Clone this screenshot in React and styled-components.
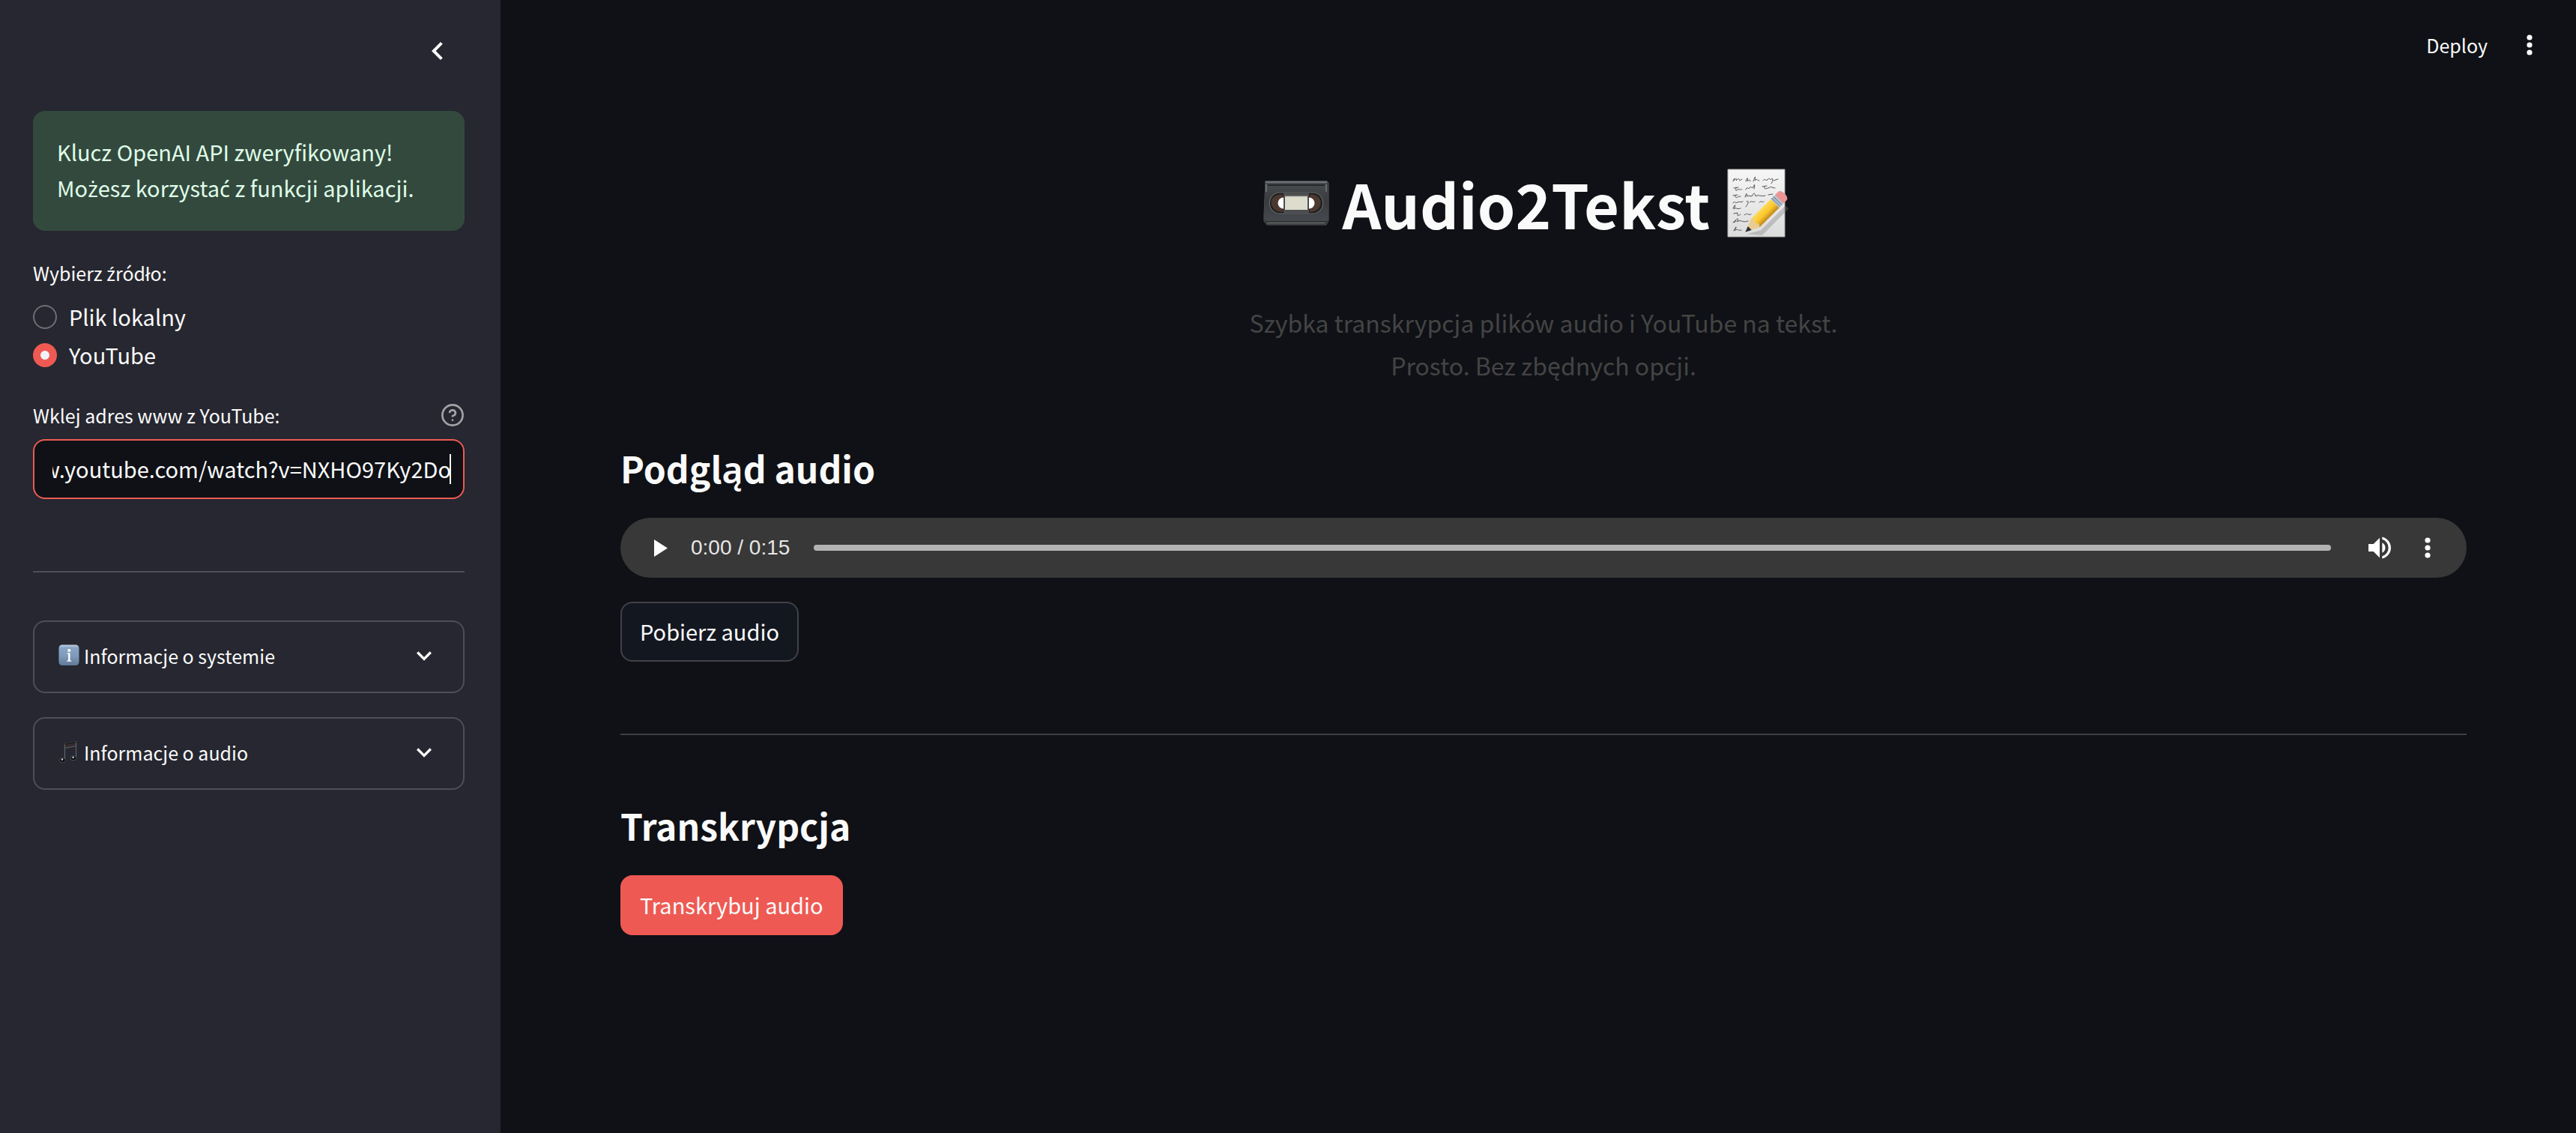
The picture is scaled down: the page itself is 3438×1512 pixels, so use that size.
import React, { useEffect, useRef, useState } from "react";
import styled, { createGlobalStyle } from "styled-components";

const font = '"Source Sans Pro", "Noto Sans CJK SC", "Noto Sans", sans-serif';

const GlobalStyle = createGlobalStyle`
  * { box-sizing: border-box; }
  body {
    margin: 0;
    background: #0f1116;
    color: #fafafa;
    font-family: ${font};
    font-size: 29px;
    line-height: 48px;
  }
  button, input { font: inherit; color: inherit; }
  button { cursor: pointer; }
  svg { display: block; flex: none; overflow: visible; }
`;

const Page = styled.div`
  display: flex;
  min-height: 100vh;
`;

const Sidebar = styled.aside`
  flex: 0 0 668px;
  padding: 36px 48px 64px 44px;
  background: #262730;
`;

const SidebarTop = styled.div`
  display: flex;
  justify-content: flex-end;
  height: 112px;
  padding-right: 4px;
`;

const IconButton = styled.button`
  display: grid;
  place-items: center;
  width: 64px;
  height: 64px;
  padding: 0;
  border: 0;
  background: none;
`;

const SidebarBody = styled.div`
  display: flex;
  flex-direction: column;
  gap: 32px;
`;

const Alert = styled.div`
  padding: 30px 32px 34px;
  border-radius: 16px;
  background: #33493d;
  color: #dffde9;
`;

const Accented = styled.span`
  font-family: "Noto Sans", sans-serif;
  line-height: 1;
`;

const Field = styled.div``;

const FieldLabel = styled.div`
  display: flex;
  align-items: center;
  justify-content: space-between;
  margin-bottom: 8px;
  font-size: 25px;
`;

const HelpButton = styled.button`
  padding: 0;
  border: 0;
  background: none;
  color: #a3a4a8;
`;

const RadioGroup = styled.div`
  display: flex;
  flex-direction: column;
  gap: 3px;
  padding-top: 3px;
`;

const RadioLabel = styled.label`
  display: flex;
  align-items: center;
  gap: 16px;
  height: 48px;
`;

const RadioText = styled.span`
  padding-bottom: 3px;
`;

const Radio = styled.input`
  appearance: none;
  width: 32px;
  height: 32px;
  margin: 0;
  border: 2px solid #6d6e75;
  border-radius: 50%;
  background: #262730;
  &:checked {
    border: 10px solid #ee5a53;
    background: #f0f2f6;
  }
`;

const TextInput = styled.input`
  display: block;
  width: 100%;
  height: 80px;
  padding: 0 16px 3px 24px;
  border: 2px solid #ee5a53;
  border-radius: 16px;
  outline: none;
  background: #0f1116 linear-gradient(#fafafa, #fafafa) right 16px center / 2px 40px no-repeat;
  caret-color: transparent;
`;

const Divider = styled.hr`
  height: 2px;
  margin: ${(p) => (p.$main ? "96px 0 0" : "64px 0 32px")};
  border: 0;
  background: ${(p) => (p.$main ? "#3e3f44" : "#4d4e57")};
`;

const Expander = styled.button`
  display: flex;
  align-items: center;
  gap: 6px;
  width: 100%;
  height: 97px;
  padding: 0 32px 3px;
  border: 2px solid #4d4e57;
  border-radius: 16px;
  background: none;
  font-size: 25px;
  text-align: left;
`;

const ExpanderText = styled.span`
  flex: 1;
`;

const Main = styled.main`
  flex: 1;
  min-width: 0;
`;

const Toolbar = styled.header`
  display: flex;
  justify-content: flex-end;
  align-items: center;
  gap: 24px;
  height: 120px;
  padding: 0 30px;
`;

const DeployButton = styled.button`
  padding: 0;
  border: 0;
  background: none;
  font-size: 25px;
`;

const Content = styled.div`
  padding: 74px 146px 96px 160px;
`;

const Title = styled.h1`
  display: flex;
  justify-content: center;
  align-items: center;
  gap: 18px;
  margin: 0;
  padding: 24px 46px 32px 0;
  font-size: 81px;
  line-height: 106px;
  font-weight: 700;
`;

const Subtitle = styled.p`
  margin: 46px 0 0;
  color: #444444;
  font-size: 32px;
  line-height: 57px;
  text-align: center;
`;

const SectionTitle = styled.h3`
  margin: ${(p) => p.$top}px 0 0;
  padding: 16px 0 32px;
  font-size: 48px;
  line-height: 70px;
  font-weight: 600;
`;

const Player = styled.div`
  display: flex;
  align-items: center;
  height: 80px;
  padding: 0 20px;
  border-radius: 40px;
  background: #383838;
`;

const Time = styled.span`
  margin: 0 32px 0 10px;
  color: #e6e6e6;
  font-family: "Liberation Sans", sans-serif;
  font-size: 28px;
`;

const Seek = styled.input`
  appearance: none;
  flex: 1;
  min-width: 0;
  height: 8px;
  margin: 0 33px 0 0;
  border-radius: 4px;
  background: #b3b3b3;
  &::-webkit-slider-thumb {
    appearance: none;
    width: 0;
    height: 0;
  }
`;

const ActionButton = styled.button`
  display: block;
  height: 80px;
  margin-top: ${(p) => (p.$primary ? 0 : 32)}px;
  padding: 0 24px 3px;
  border: 2px solid ${(p) => (p.$primary ? "#ee5a53" : "#414249")};
  border-radius: 16px;
  background: ${(p) => (p.$primary ? "#ee5a53" : "#131720")};
`;

const ChevronLeft = () => (
  <svg width="48" height="48" viewBox="0 0 24 24" fill="#fafafa">
    <path d="M15.41 7.41 14 6l-6 6 6 6 1.41-1.41L10.83 12z" />
  </svg>
);

const ChevronDown = () => (
  <svg width="40" height="40" viewBox="0 0 24 24" fill="#fafafa">
    <path d="M16.59 8.59 12 13.17 7.41 8.59 6 10l6 6 6-6z" />
  </svg>
);

const Dots = () => (
  <svg width="40" height="40" viewBox="0 0 40 40" fill="#fff">
    <circle cx="20" cy="10" r="3.6" />
    <circle cx="20" cy="20" r="3.6" />
    <circle cx="20" cy="30" r="3.6" />
  </svg>
);

const PlayIcon = () => (
  <svg width="40" height="40" viewBox="0 0 40 40" fill="#fff">
    <path d="M13 9v23l18-11.500z" />
  </svg>
);

const VolumeIcon = () => (
  <svg width="40" height="40" viewBox="0 0 24 24" fill="#fff">
    <path d="M3 9v6h4l5 5V4L7 9H3zm13.500 3A4.500 4.500 0 0 0 14 7.970v8.050A4.500 4.500 0 0 0 16.500 12zM14 3.230v2.060a7 7 0 0 1 0 13.420v2.060a9 9 0 0 0 0-17.540z" />
  </svg>
);

const HelpIcon = () => (
  <svg width="32" height="32" viewBox="0 0 24 24" fill="none" stroke="currentColor" strokeWidth="2" strokeLinecap="round" strokeLinejoin="round">
    <circle cx="12" cy="12" r="10.200" />
    <path d="M9.100 9a3 3 0 0 1 5.830 1c0 2-3 3-3 3" />
    <path d="M12 17h.01" />
  </svg>
);

const InfoEmoji = () => (
  <svg width="28" height="30" viewBox="0 0 28 30">
    <defs>
      <linearGradient id="info" x1="0" y1="0" x2="0" y2="1">
        <stop offset="0" stopColor="#c3d3e6" />
        <stop offset="0.140" stopColor="#89a5c5" />
        <stop offset="0.550" stopColor="#7f9aba" />
        <stop offset="1" stopColor="#5f7a97" />
      </linearGradient>
    </defs>
    <rect x="0.500" y="0.500" width="27" height="27.500" rx="4.500" fill="url(#info)" />
    <circle cx="14.300" cy="8" r="2.100" fill="#fff" />
    <path d="M11.500 11.500h4v10h1.800v1.300h-6v-1.300h1.800v-8.700h-1.600z" fill="#fff" />
  </svg>
);

const NotesEmoji = () => (
  <svg width="28" height="30" viewBox="0 0 28 30">
    <path d="M8 3.500 24 .5v5L8 8.500z" fill="#372b2d" />
    <path d="M8.500 25V3.600L23.500.8V22M8.500 9.500l15-3" fill="none" stroke="#5c6366" strokeWidth="1.200" />
    <path d="M8.500 4 23.500 1.200" stroke="#171719" strokeWidth="1.500" />
    <ellipse cx="5.500" cy="25.500" rx="4" ry="3" fill="#0b0c0d" stroke="#465154" />
    <ellipse cx="20" cy="22.700" rx="4" ry="3" fill="#0b0c0d" stroke="#465154" />
    <circle cx="5" cy="24.500" r="1.200" fill="#d4dada" />
    <circle cx="19.600" cy="21.700" r="1.200" fill="#d4dada" />
  </svg>
);

const CassetteEmoji = () => (
  <svg width="88" height="92" viewBox="0 0 88 92">
    <defs>
      <linearGradient id="tape" x1="0" y1="0" x2="0" y2="1">
        <stop offset="0" stopColor="#4a4d50" />
        <stop offset="0.500" stopColor="#393b3e" />
        <stop offset="1" stopColor="#46494d" />
      </linearGradient>
    </defs>
    <path d="M3 17h82l2 2v50l-3 6H5l-4-5V62z" fill="#2c2e30" stroke="#55585a" />
    <path d="M2.500 16.500h83L87 63c0 5-1 7-4 7H5c-3 0-4-2-4-7z" fill="url(#tape)" />
    <path d="M5 72.500h78" stroke="#6c6f70" strokeWidth="1.500" />
    <path d="M3 18h82" stroke="#717476" strokeWidth="1.800" />
    <path d="M4 21v10M84 21v10" stroke="#686b6d" strokeWidth="2" />
    <path d="M6 22h76" stroke="#242628" strokeWidth="2" />
    <path d="M27 32H21C4 34 4 58 21 60H67C84 58 84 34 67 32z" fill="#1f2021" stroke="#606366" strokeWidth="1.200" />
    <path d="M26 34.500C5 33 6 58 26 58z" fill="#4b382f" />
    <path d="M62 34.500C82 33 81 58 62 58z" fill="#4b382f" />
    <circle cx="27" cy="46" r="7.500" fill="#fff" />
    <circle cx="61" cy="46" r="7.500" fill="#fff" />
    <path d="M27 32h34v28H27z" fill="#4b4e51" />
    <path d="M29 37h30v18H29z" fill="#dedccd" />
    <path d="M29 37h30" stroke="#aaa99f" />
  </svg>
);

const MemoEmoji = () => (
  <svg width="88" height="92" viewBox="0 0 88 92">
    <defs>
      <linearGradient id="paper" x1="0" y1="0" x2="0" y2="1">
        <stop offset="0" stopColor="#f6f6f6" />
        <stop offset="1" stopColor="#dcdcdc" />
      </linearGradient>
      <linearGradient id="pencil" x1="0" y1="0" x2="1" y2="0">
        <stop offset="0" stopColor="#ffdb53" />
        <stop offset="0.550" stopColor="#fac52d" />
        <stop offset="1" stopColor="#bf861a" />
      </linearGradient>
    </defs>
    <path d="M6 1h76v90H6z" fill="url(#paper)" stroke="#aaa" />
    <g fill="none" stroke="#555" strokeWidth="1" strokeLinecap="round" strokeLinejoin="round">
      <path d="M13 17c2-5 2-5 1-1 3-4 4-3 3 0 3-3 4-3 5 0l3-2M30 17c2-6 3-6 2 0 3-3 4-2 4 0M40 17c3-8 3-8 2-1 4-4 3 1 6 0M53 16c3-4 3 1 6-1 2-4 3 1 5-1 3-3 2 4 0 6M67 16l6-2" />
      <path d="M14 26l6-1m-3 0c-1 5 0 6 3 2 2 3 4-1 5 1M30 28c2-5 3 0 5-2 2-4 2 1 5-1 1-5 3-5 1 2M52 24l6-1m-3 1c-1 5 3 2 5 2 4-3 6 0 9 0" />
      <path d="M13 36l6-1m-3 1c0 6 4 0 7 1M29 38c2-7 3-5 2-1 3-2 5 1 8-1 2-6 4-1 4 1 4-3 7 1 13-1M60 35l6-1" />
      <path d="M13 46c2-4 3 1 6-1 2-2 3 1 7-1M31 44c4-3 2 4-1 7M35 45c3-3 4 1 7-1M48 45c3-3 3 1 6-1" />
      <path d="M13 53c4-9 3-2 1 1 3-3 4 1 9-1M14 60l5-1c-1 6 2 3 4 2M28 62c4-4 5 1 9-1" />
      <path d="M13 72c6-6 4-1 1 0 6-9 7-4 4-1 6-4 7 2 15-1M14 83c4-9 4-5 1 0 4-4 5 1 9-1" />
    </g>
    <g transform="translate(30 84) rotate(45)">
      <path d="M3 2 13-15V-62H19V-12z" fill="#777" opacity=".35" />
      <path d="M-7-17V-54H9v37z" fill="url(#pencil)" />
      <path d="M-7-17 0 0 9-17 5-20 1-17-3-20z" fill="#e9cc91" />
      <path d="M-3-7 0 1 4-7z" fill="#2e3036" />
      <path d="M-7-62H9v8H-7z" fill="#b3c2cf" />
      <path d="M-7-59H9M-7-56H9" stroke="#71889b" />
      <path d="M-7-62v-6c0-6 16-6 16 0v6z" fill="#ec9495" />
    </g>
  </svg>
);

// The main family has no ready-made glyphs for these letters.
const Pl = ({ children }) =>
  children.split(/([żźćł])/).map((part, i) => (i % 2 ? <Accented key={i}>{part}</Accented> : part));

export default function App() {
  const [source, setSource] = useState("youtube");
  const [url, setUrl] = useState("https://www.youtube.com/watch?v=NXHO97Ky2Do");
  const urlRef = useRef(null);

  useEffect(() => {
    const el = urlRef.current;
    el.focus();
    el.setSelectionRange(el.value.length, el.value.length);
    el.scrollLeft = el.scrollWidth;
  }, []);

  return (
    <>
      <GlobalStyle />
      <Page lang="pl">
        <Sidebar>
          <SidebarTop>
            <IconButton aria-label="Zwiń panel"><ChevronLeft /></IconButton>
          </SidebarTop>
          <SidebarBody>
            <Alert role="status">
              Klucz OpenAI API zweryfikowany!<br />
              <Pl>Możesz korzystać z funkcji aplikacji.</Pl>
            </Alert>
            <Field role="radiogroup" aria-labelledby="source-label">
              <FieldLabel>
                <span id="source-label"><Pl>Wybierz źródło:</Pl></span>
              </FieldLabel>
              <RadioGroup>
                <RadioLabel>
                  <Radio type="radio" name="source" checked={source === "file"} onChange={() => setSource("file")} />
                  <RadioText>Plik lokalny</RadioText>
                </RadioLabel>
                <RadioLabel>
                  <Radio type="radio" name="source" checked={source === "youtube"} onChange={() => setSource("youtube")} />
                  <RadioText>YouTube</RadioText>
                </RadioLabel>
              </RadioGroup>
            </Field>
            <Field>
              <FieldLabel>
                <label htmlFor="url">Wklej adres www z YouTube:</label>
                <HelpButton aria-label="Pomoc"><HelpIcon /></HelpButton>
              </FieldLabel>
              <TextInput id="url" type="text" ref={urlRef} value={url} onChange={(e) => setUrl(e.target.value)} />
            </Field>
            <Divider />
            <Expander aria-expanded="false">
              <InfoEmoji />
              <ExpanderText>Informacje o systemie</ExpanderText>
              <ChevronDown />
            </Expander>
            <Expander aria-expanded="false">
              <NotesEmoji />
              <ExpanderText>Informacje o audio</ExpanderText>
              <ChevronDown />
            </Expander>
          </SidebarBody>
        </Sidebar>
        <Main>
          <Toolbar>
            <DeployButton>Deploy</DeployButton>
            <IconButton aria-label="Menu"><Dots /></IconButton>
          </Toolbar>
          <Content>
            <Title>
              <CassetteEmoji />
              Audio2Tekst
              <MemoEmoji />
            </Title>
            <Subtitle>
              Szybka transkrypcja plików audio i YouTube na tekst.<br />
              Prosto. Bez zbędnych opcji.
            </Subtitle>
            <SectionTitle $top={57}>Podgląd audio</SectionTitle>
            <Player>
              <IconButton aria-label="Odtwórz"><PlayIcon /></IconButton>
              <Time>0:00 / 0:15</Time>
              <Seek type="range" min="0" max="15" defaultValue="0" aria-label="Pozycja" />
              <IconButton aria-label="Głośność"><VolumeIcon /></IconButton>
              <IconButton aria-label="Więcej opcji"><Dots /></IconButton>
            </Player>
            <ActionButton>Pobierz audio</ActionButton>
            <Divider $main />
            <SectionTitle $top={69}>Transkrypcja</SectionTitle>
            <ActionButton $primary>Transkrybuj audio</ActionButton>
          </Content>
        </Main>
      </Page>
    </>
  );
}
